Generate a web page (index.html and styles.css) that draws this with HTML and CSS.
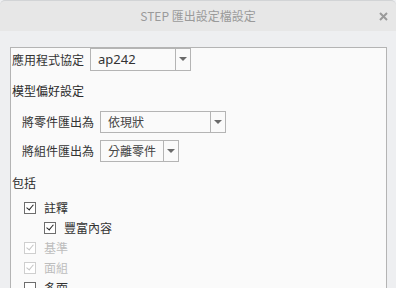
FILE: index.html
```html
<!DOCTYPE html>
<html lang="zh-Hant">
<head>
<meta charset="utf-8">
<link rel="stylesheet" href="styles.css">
</head>
<body>
<div class="window">
  <div class="titlebar">
    <span class="title">STEP 匯出設定檔設定</span>
    <svg class="close" width="9" height="9" viewBox="0 0 9 9"><path d="M1 1L8 8M8 1L1 8" stroke="#9a9a9a" stroke-width="2"/></svg>
  </div>
  <div class="content">
    <div class="panel">
      <div class="row">
        <span class="label">應用程式協定</span>
        <div class="select w1"><span class="value latin">ap242</span><span class="arrow"></span></div>
      </div>
      <div class="heading h1">模型偏好設定</div>
      <div class="row indent">
        <span class="label">將零件匯出為</span>
        <div class="select w2"><span class="value">依現狀</span><span class="arrow"></span></div>
      </div>
      <div class="row indent r3">
        <span class="label">將組件匯出為</span>
        <div class="select w3"><span class="value">分離零件</span><span class="arrow"></span></div>
      </div>
      <div class="heading h2">包括</div>
      <div class="check"><span class="box on"></span><span>註釋</span></div>
      <div class="check sub"><span class="box on"></span><span>豐富內容</span></div>
      <div class="check disabled"><span class="box on"></span><span>基準</span></div>
      <div class="check disabled"><span class="box on"></span><span>面組</span></div>
      <div class="check"><span class="box"></span><span>多面</span></div>
    </div>
  </div>
</div>
</body>
</html>
```
FILE: styles.css
```css
html, body {
  margin: 0;
  padding: 0;
}
body {
  width: 396px;
  height: 288px;
  overflow: hidden;
  background: #eeeff1;
  font-family: "Noto Sans CJK TC", "Noto Sans", sans-serif;
  font-size: 12px;
  color: #333;
}
.window {
  height: 288px;
}
.titlebar {
  height: 31px;
  background: #e7e7e7;
  border-top: 1px solid #d2d4d6;
  border-radius: 5px 5px 0 0;
  box-sizing: border-box;
  display: flex;
  align-items: center;
  justify-content: center;
  position: relative;
  color: #9a9a9a;
}
.title {
  font-size: 12px;
  line-height: 16px;
}
.close {
  position: absolute;
  right: 8px;
  top: 11px;
}
.content {
  padding: 16px 9px 0 10px;
}
.panel {
  border: 1px solid #b4b4b4;
  background: #fafafa;
  height: 260px;
  padding: 0 0 0 1px;
}
.row {
  display: flex;
  align-items: center;
  height: 23px;
}
.label {
  width: 78px;
  line-height: 16px;
}
.indent {
  padding-left: 10px;
}
.r3 {
  margin-top: 6px;
}
.select {
  height: 22px;
  box-sizing: border-box;
  border: 1px solid #b4b4b4;
  display: flex;
  align-items: stretch;
  background: #fafafa;
}
.select .value {
  flex: 1;
  padding-left: 7px;
  line-height: 20px;
  font-size: 12px;
  color: #444;
}
.select .latin {
  font-family: "Noto Sans", sans-serif;
  font-size: 13px;
  color: #333;
}
.select .arrow {
  width: 14px;
  border-left: 1px solid #b4b4b4;
  position: relative;
}
.select .arrow::after {
  content: "";
  position: absolute;
  left: 3px;
  top: 8px;
  border-left: 4px solid transparent;
  border-right: 4px solid transparent;
  border-top: 4px solid #6a6a6a;
}
.w1 { width: 101px; height: 23px; }
.w1 .value { line-height: 21px; }
.w2 { width: 126px; }
.w3 { width: 79px; }
.heading {
  color: #2a2a2a;
  line-height: 16px;
}
.h1 {
  padding: 12px 0 0;
  height: 27px;
}
.h2 {
  padding: 13px 0 0;
  height: 23px;
}
.check {
  display: flex;
  align-items: center;
  height: 20px;
  padding-left: 12px;
  line-height: 16px;
}
.check.sub {
  padding-left: 32px;
}
.box {
  width: 12px;
  height: 12px;
  box-sizing: border-box;
  border: 1px solid #6d6d6d;
  background: #fff;
  margin-right: 8px;
  position: relative;
}
.box.on::after {
  content: "";
  position: absolute;
  left: 3px;
  top: 0px;
  width: 3px;
  height: 6px;
  border-right: 1.5px solid #222;
  border-bottom: 1.5px solid #222;
  transform: rotate(40deg);
}
.disabled {
  color: #bdbdbd;
}
.disabled .box {
  border-color: #cfcfcf;
}
.disabled .box.on::after {
  border-color: #c4c4c4;
}
```
